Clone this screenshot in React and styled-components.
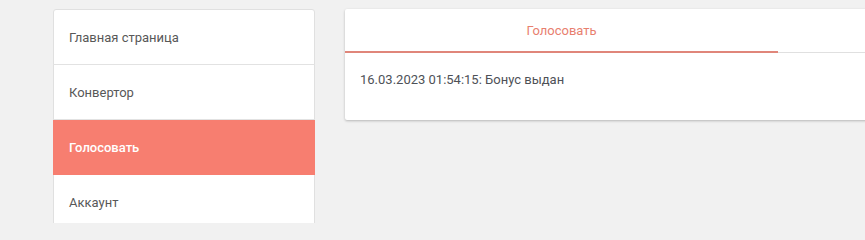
import React from "react";
import styled, { createGlobalStyle } from "styled-components";

const GlobalStyle = createGlobalStyle`
  html, body {
    margin: 0;
    padding: 0;
    background: #f1f1f1;
    font-family: Roboto, "Noto Sans", Arial, sans-serif;
  }
`;

const Page = styled.div`
  display: flex;
  align-items: flex-start;
  gap: 30px;
  padding: 9px 0 0 53px;
  height: 223px;
  box-sizing: border-box;
  overflow: hidden;
`;

const Sidebar = styled.nav`
  flex: 0 0 262px;
  box-sizing: border-box;
  background: #fff;
  border: 1px solid #e0e0e0;
  border-radius: 3px;
  display: flex;
  flex-direction: column;
`;

const Item = styled.a`
  display: flex;
  align-items: center;
  height: 54px;
  padding: 0 16px;
  margin: 0 -1px;
  border-bottom: 1px solid ${(p) => (p.$active ? "#f77e70" : "#e2e2e2")};
  background: ${(p) => (p.$active ? "#f77e70" : "transparent")};
  color: ${(p) => (p.$active ? "#fff" : "#585858")};
  font-size: 13px;
  font-weight: ${(p) => (p.$active ? 500 : 400)};
  text-decoration: none;
  cursor: pointer;
`;

const Card = styled.section`
  flex: 0 0 560px;
  height: 111px;
  background: #fff;
  border-radius: 2px;
  box-shadow: 0 1px 3px rgba(0, 0, 0, 0.18), 0 1px 2px rgba(0, 0, 0, 0.08);
  display: flex;
  flex-direction: column;
`;

const Tabs = styled.div`
  display: flex;
  border-bottom: 1px solid #e0e0e0;
`;

const Tab = styled.div`
  width: 433px;
  height: 42px;
  display: flex;
  align-items: center;
  justify-content: center;
  font-size: 13px;
  color: #e8806f;
  border-bottom: ${(p) => (p.$active ? "2px solid #e0867a" : "none")};
  margin-bottom: -1px;
`;

const Body = styled.div`
  padding: 19px 15px;
  font-size: 13px;
  color: #4e5157;
`;

export default function App() {
  const items = ["Главная страница", "Конвертор", "Голосовать", "Аккаунт"];
  return (
    <>
      <GlobalStyle />
      <Page>
        <Sidebar>
          {items.map((t) => (
            <Item key={t} $active={t === "Голосовать"}>
              {t}
            </Item>
          ))}
        </Sidebar>
        <Card>
          <Tabs>
            <Tab $active>Голосовать</Tab>
          </Tabs>
          <Body>16.03.2023 01:54:15: Бонус выдан</Body>
        </Card>
      </Page>
    </>
  );
}
